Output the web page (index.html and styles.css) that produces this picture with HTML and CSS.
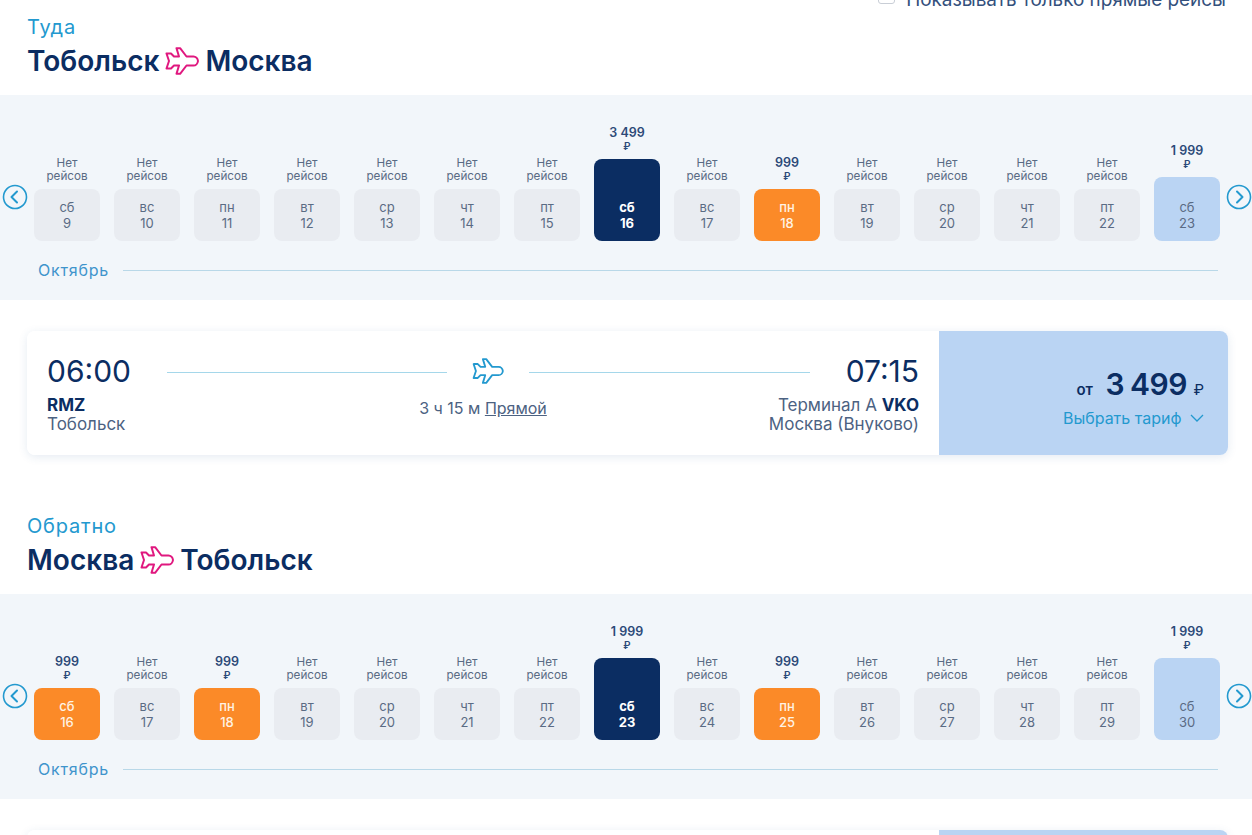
FILE: index.html
```html
<!DOCTYPE html>
<html lang="en">
<head>
<meta charset="UTF-8">
<meta name="viewport" content="width=device-width, initial-scale=1.0">
<title>Выбор рейса</title>
<link rel="stylesheet" href="styles.css">
</head>
<body>
<svg class="sprite" width="0" height="0">
<symbol id="plane" viewBox="0 0 34 28">
<path d="M11.500 1.200h3.600l6.400 8.300h7c2.200 0 4.200 2 4.500 4.500-.3 2.500-2.300 4.500-4.500 4.500h-7l-6.400 8.300h-3.600l2.500-8.300H9l-3 3H1.500L4 14 1.500 6.500H6l3 3h5z" fill="none" stroke="currentColor" stroke-width="2" stroke-linejoin="round"/>
</symbol>
<symbol id="circle-left" viewBox="0 0 26 26">
<circle cx="13" cy="13" r="11.500" fill="none" stroke="currentColor" stroke-width="1.600"/>
<path d="M15 7.500 9.500 13l5.500 5.500" fill="none" stroke="currentColor" stroke-width="2" stroke-linecap="round" stroke-linejoin="round"/>
</symbol>
<symbol id="circle-right" viewBox="0 0 26 26">
<circle cx="13" cy="13" r="11.500" fill="none" stroke="currentColor" stroke-width="1.600"/>
<path d="M11 7.500 16.500 13 11 18.500" fill="none" stroke="currentColor" stroke-width="2" stroke-linecap="round" stroke-linejoin="round"/>
</symbol>
</svg>

<div class="page">
<div class="direct-only">
<span class="checkbox"></span>
<span>Показывать только прямые рейсы</span>
</div>

<section class="way">
<div class="way-head">
<div class="way-label">Туда</div>
<h2 class="way-title">Тобольск <svg class="title-plane"><use href="#plane"/></svg> Москва</h2>
</div>
<div class="strip">
<div class="days">
<svg class="nav nav-prev"><use href="#circle-left"/></svg>
<div class="day"><div class="note">Нет<br>рейсов</div><div class="cell">сб<br>9</div></div>
<div class="day"><div class="note">Нет<br>рейсов</div><div class="cell">вс<br>10</div></div>
<div class="day"><div class="note">Нет<br>рейсов</div><div class="cell">пн<br>11</div></div>
<div class="day"><div class="note">Нет<br>рейсов</div><div class="cell">вт<br>12</div></div>
<div class="day"><div class="note">Нет<br>рейсов</div><div class="cell">ср<br>13</div></div>
<div class="day"><div class="note">Нет<br>рейсов</div><div class="cell">чт<br>14</div></div>
<div class="day"><div class="note">Нет<br>рейсов</div><div class="cell">пт<br>15</div></div>
<div class="day"><div class="price">3 499<br><span class="rub">₽</span></div><div class="cell cell-current">сб<br>16</div></div>
<div class="day"><div class="note">Нет<br>рейсов</div><div class="cell">вс<br>17</div></div>
<div class="day"><div class="price">999<br><span class="rub">₽</span></div><div class="cell cell-cheap">пн<br>18</div></div>
<div class="day"><div class="note">Нет<br>рейсов</div><div class="cell">вт<br>19</div></div>
<div class="day"><div class="note">Нет<br>рейсов</div><div class="cell">ср<br>20</div></div>
<div class="day"><div class="note">Нет<br>рейсов</div><div class="cell">чт<br>21</div></div>
<div class="day"><div class="note">Нет<br>рейсов</div><div class="cell">пт<br>22</div></div>
<div class="day"><div class="price">1 999<br><span class="rub">₽</span></div><div class="cell cell-week">сб<br>23</div></div>
<svg class="nav nav-next"><use href="#circle-right"/></svg>
</div>
<div class="month"><span>Октябрь</span><i class="month-line"></i></div>
</div>
<div class="flight">
<div class="flight-info">
<div class="times">
<span class="time">06:00</span>
<i class="route-line"></i>
<svg class="route-plane"><use href="#plane"/></svg>
<i class="route-line"></i>
<span class="time">07:15</span>
</div>
<div class="places">
<div class="place"><b>RMZ</b><br>Тобольск</div>
<div class="duration">3 ч 15 м <u>Прямой</u></div>
<div class="place place-end">Терминал А <b>VKO</b><br>Москва (Внуково)</div>
</div>
</div>
<div class="fare">
<div class="fare-price"><span class="fare-from">от</span> <span class="fare-sum">3 499</span> <span class="fare-rub">₽</span></div>
<div class="fare-link">Выбрать тариф <svg class="chevron" viewBox="0 0 14 8"><path d="M1 1l6 6 6-6" fill="none" stroke="currentColor" stroke-width="1.300"/></svg></div>
</div>
</div>
</section>

<section class="way">
<div class="way-head">
<div class="way-label">Обратно</div>
<h2 class="way-title">Москва <svg class="title-plane"><use href="#plane"/></svg> Тобольск</h2>
</div>
<div class="strip">
<div class="days">
<svg class="nav nav-prev"><use href="#circle-left"/></svg>
<div class="day"><div class="price">999<br><span class="rub">₽</span></div><div class="cell cell-cheap">сб<br>16</div></div>
<div class="day"><div class="note">Нет<br>рейсов</div><div class="cell">вс<br>17</div></div>
<div class="day"><div class="price">999<br><span class="rub">₽</span></div><div class="cell cell-cheap">пн<br>18</div></div>
<div class="day"><div class="note">Нет<br>рейсов</div><div class="cell">вт<br>19</div></div>
<div class="day"><div class="note">Нет<br>рейсов</div><div class="cell">ср<br>20</div></div>
<div class="day"><div class="note">Нет<br>рейсов</div><div class="cell">чт<br>21</div></div>
<div class="day"><div class="note">Нет<br>рейсов</div><div class="cell">пт<br>22</div></div>
<div class="day"><div class="price">1 999<br><span class="rub">₽</span></div><div class="cell cell-current">сб<br>23</div></div>
<div class="day"><div class="note">Нет<br>рейсов</div><div class="cell">вс<br>24</div></div>
<div class="day"><div class="price">999<br><span class="rub">₽</span></div><div class="cell cell-cheap">пн<br>25</div></div>
<div class="day"><div class="note">Нет<br>рейсов</div><div class="cell">вт<br>26</div></div>
<div class="day"><div class="note">Нет<br>рейсов</div><div class="cell">ср<br>27</div></div>
<div class="day"><div class="note">Нет<br>рейсов</div><div class="cell">чт<br>28</div></div>
<div class="day"><div class="note">Нет<br>рейсов</div><div class="cell">пт<br>29</div></div>
<div class="day"><div class="price">1 999<br><span class="rub">₽</span></div><div class="cell cell-week cell-tall">сб<br>30</div></div>
<svg class="nav nav-next"><use href="#circle-right"/></svg>
</div>
<div class="month"><span>Октябрь</span><i class="month-line"></i></div>
</div>
<div class="flight">
<div class="flight-info"></div>
<div class="fare"></div>
</div>
</section>
</div>
</body>
</html>
```
FILE: styles.css
```css
html, body { margin: 0; height: 100%; overflow: hidden; }
body { font-family: "Inter", "Noto Sans", sans-serif; color: #0b2d62; background-color: white; }
.sprite { display: block; }
.page { height: 835px; overflow: hidden; }

.direct-only { display: flex; justify-content: flex-end; align-items: center; gap: 11px; height: 20px; margin-top: -11px; padding-right: 26px; font-size: 18.900px; color: #33507c; }
.checkbox { width: 17px; height: 17px; margin-bottom: 8px; border: 1px solid #c9ced6; border-radius: 3px; box-sizing: border-box; }

.way { margin-bottom: 53px; }
.way-head { padding-left: 27px; height: 86px; box-sizing: border-box; padding-top: 6px; }
.way-label { font-size: 20px; letter-spacing: 0.800px; line-height: 24px; color: #2399cf; }
.way-title { margin: 4px 0 0; font-size: 28px; line-height: 36px; font-weight: 600; color: #0b2d62; display: flex; align-items: center; gap: 6px; }
.title-plane { width: 34px; height: 28px; color: #e0187f; }

.strip { background-color: #f2f6fa; height: 205px; box-sizing: border-box; padding-top: 27px; }
.days { display: flex; align-items: flex-end; height: 119px; padding-left: 34px; position: relative; }
.day { width: 66px; margin-right: 14px; display: flex; flex-direction: column; align-items: center; justify-content: flex-end; }
.note { font-size: 11.700px; line-height: 13px; color: #5a6b84; text-align: center; margin-bottom: 6px; }
.price { font-size: 12.500px; line-height: 13px; font-weight: 600; color: #2c4a78; text-align: center; margin-bottom: 6px; }
.rub { font-size: 10px; }
.cell { width: 66px; height: 52px; border-radius: 8px; background-color: #e9ecf1; color: #5a6b84; font-size: 13px; line-height: 16px; text-align: center; display: flex; flex-direction: column; justify-content: flex-end; padding-bottom: 10px; box-sizing: border-box; }
.cell-current { height: 82px; background-color: #0b2d62; color: white; font-weight: 700; }
.cell-cheap { background-color: #fb8a28; color: #fff3e4; font-weight: 500; }
.cell-week { height: 64px; background-color: #bad4f3; }
.cell-tall { height: 82px; }
.nav { width: 26px; height: 26px; color: #2399cf; position: absolute; top: 62px; }
.nav-prev { left: 2px; }
.nav-next { right: 0; }

.month { display: flex; align-items: center; gap: 14px; margin-top: 18px; padding: 0 34px 0 38px; font-size: 16px; letter-spacing: 0.800px; line-height: 22px; color: #3f94cc; }
.month-line { flex: 1; height: 1px; background-color: #b9d8e8; }

.flight { display: flex; height: 124px; margin: 31px 24px 0 27px; border-radius: 8px; box-shadow: 0 2px 10px rgba(40, 90, 150, 0.12); overflow: hidden; }
.flight-info { flex: 1; padding: 0 20px; background-color: white; }
.times { display: flex; align-items: center; height: 40px; margin-top: 20px; }
.time { font-size: 30px; line-height: 40px; color: #0b2d62; }
.route-line { flex: 1; height: 1px; background-color: #a5d7ea; margin: 3px 36px 0; }
.route-plane { width: 32px; height: 26px; color: #2399cf; margin: 0 -11px; }
.places { display: grid; grid-template-columns: 1fr auto 1fr; margin-top: 5px; font-size: 17px; line-height: 19px; color: #4c6282; }
.place b { color: #0b2d62; }
.place-end { text-align: right; }
.duration { color: #4c6282; font-size: 16px; margin-top: 3px; }
.fare { width: 289px; background-color: #bad4f3; text-align: right; padding: 34px 24px 0 0; box-sizing: border-box; }
.fare-price { color: #0b2d62; line-height: 38px; }
.fare-from { font-size: 15px; font-weight: 600; margin-right: 8px; }
.fare-sum { font-size: 30px; font-weight: 600; letter-spacing: -0.500px; word-spacing: -1px; }
.fare-rub { font-size: 15px; margin-left: 2px; }
.fare-link { margin-top: -1px; font-size: 16px; line-height: 20px; color: #2399cf; }
.chevron { width: 14px; height: 8px; margin-left: 4px; vertical-align: 2px; }
```
